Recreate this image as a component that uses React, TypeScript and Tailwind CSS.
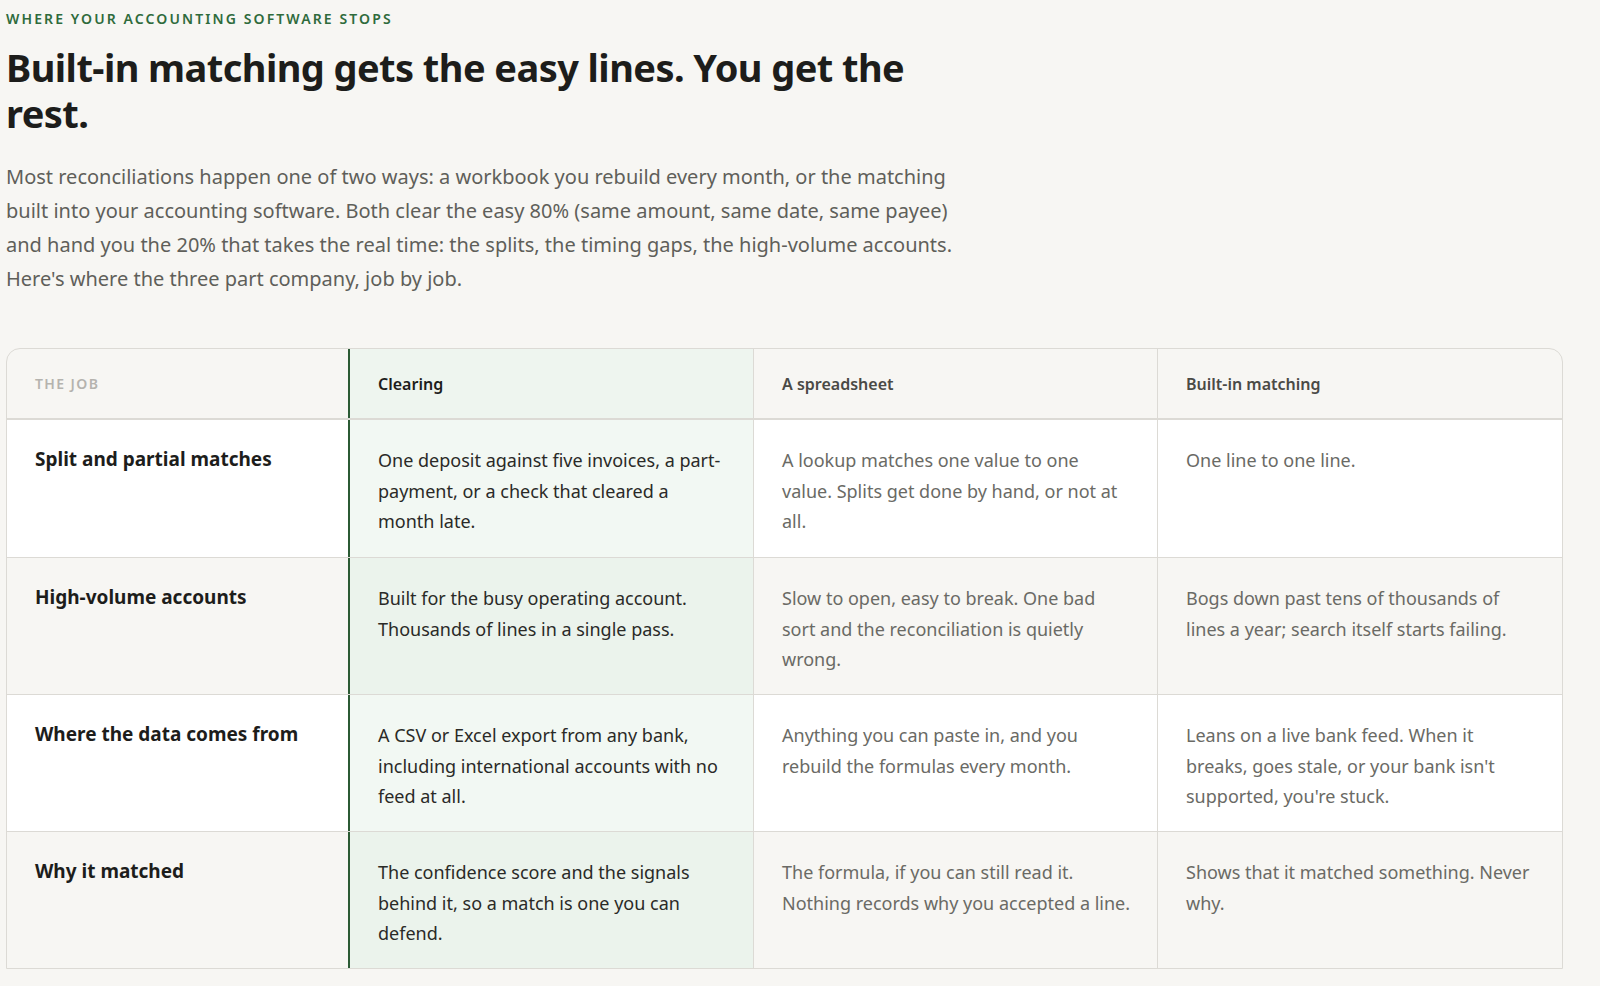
const rows = [
  ["Split and partial matches", "One deposit against five invoices, a part-payment, or a check that cleared a month late.", "A lookup matches one value to one value. Splits get done by hand, or not at all.", "One line to one line."],
  ["High-volume accounts", "Built for the busy operating account. Thousands of lines in a single pass.", "Slow to open, easy to break. One bad sort and the reconciliation is quietly wrong.", "Bogs down past tens of thousands of lines a year; search itself starts failing."],
  ["Where the data comes from", "A CSV or Excel export from any bank, including international accounts with no feed at all.", "Anything you can paste in, and you rebuild the formulas every month.", "Leans on a live bank feed. When it breaks, goes stale, or your bank isn't supported, you're stuck."],
  ["Why it matched", "The confidence score and the signals behind it, so a match is one you can defend.", "The formula, if you can still read it. Nothing records why you accepted a line.", "Shows that it matched something. Never why."],
];

export default function App() {
  return (
    <div className="min-h-[986px] bg-[#f7f6f3] pl-[6px] pt-[10px] text-[#1d1d1b]" style={{ fontFamily: '"Noto Sans", "Open Sans", sans-serif' }}>
      <div className="text-[14px] font-semibold tracking-[0.15em] text-[#2f6b3c] leading-[18px]">WHERE YOUR ACCOUNTING SOFTWARE STOPS</div>
      <h1 className="mt-[16px] w-[930px] text-[38px] font-bold leading-[46px] tracking-[-0.015em]">Built-in matching gets the easy lines. You get the rest.</h1>
      <p className="mt-[24px] w-[960px] text-[20px] leading-[34px] text-[#5f5f5a]">Most reconciliations happen one of two ways: a workbook you rebuild every month, or the matching built into your accounting software. Both clear the easy 80% (same amount, same date, same payee) and hand you the 20% that takes the real time: the splits, the timing gaps, the high-volume accounts. Here's where the three part company, job by job.</p>
      <div className="mt-[52px] w-[1557px] overflow-hidden rounded-tl-[14px] rounded-tr-[14px] border border-[#dcdad5]">
        <div className="grid grid-cols-[341px_405px_404px_1fr] h-[71px] border-b-2 border-[#dcdad5] text-[16px] font-semibold">
          <div className="flex items-center pl-[28px] text-[14px] tracking-[0.1em] text-[#b5b3ae]">THE JOB</div>
          <div className="flex items-center pl-[28px] bg-[#eef5ef] border-l-2 border-[#2b5a34] text-[#1d1d1b]">Clearing</div>
          <div className="flex items-center pl-[28px] border-l border-[#dcdad5] text-[#4a4a46]">A spreadsheet</div>
          <div className="flex items-center pl-[28px] border-l border-[#dcdad5] text-[#4a4a46]">Built-in matching</div>
        </div>
        {rows.map((r, i) => (
          <div key={i} className={`grid grid-cols-[341px_405px_404px_1fr] h-[137px] ${i > 0 ? "border-t border-[#dcdad5]" : ""} ${i % 2 === 0 ? "bg-white" : "bg-[#f7f6f3]"}`}>
            <div className="pl-[28px] pt-[24px] text-[19px] font-bold leading-[30px]">{r[0]}</div>
            <div className={`pl-[28px] pr-[24px] pt-[25px] text-[18px] leading-[30.5px] text-[#2a2a27] border-l-2 border-[#2b5a34] ${i % 2 === 0 ? "bg-[#f2f8f3]" : "bg-[#ebf3ec]"}`}>{r[1]}</div>
            <div className="pl-[28px] pr-[24px] pt-[25px] text-[18px] leading-[30.5px] text-[#6a6a65] border-l border-[#dcdad5]">{r[2]}</div>
            <div className="pl-[28px] pr-[24px] pt-[25px] text-[18px] leading-[30.5px] text-[#6a6a65] border-l border-[#dcdad5]">{r[3]}</div>
          </div>
        ))}
      </div>
    </div>
  );
}
